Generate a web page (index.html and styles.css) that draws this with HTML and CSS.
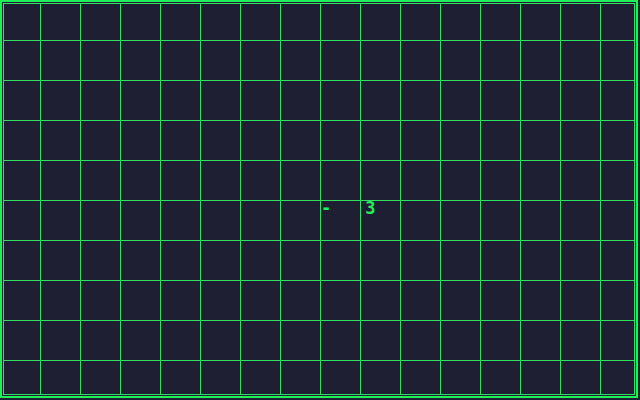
FILE: index.html
```html
<!DOCTYPE html>
<html>
<head>
<meta charset="utf-8">
<link rel="stylesheet" href="styles.css">
</head>
<body>
<div class="board">
  <div class="labels">
    <span class="minus">-</span>
    <span class="num">3</span>
  </div>
</div>
</body>
</html>
```
FILE: styles.css
```css
html, body {
  margin: 0;
  padding: 0;
  background: #1f1f33;
  width: 640px;
  height: 400px;
  overflow: hidden;
}
.board {
  box-sizing: border-box;
  width: 638px;
  height: 398px;
  border: 2px solid #1ff05a;
  box-shadow: inset 0 0 0 1px #1f1f33, inset 0 0 0 2px #30e060;
  background-color: #1f1f33;
  background-image:
    linear-gradient(to right, #30e060 1px, transparent 1px),
    linear-gradient(to bottom, #30e060 1px, transparent 1px);
  background-size: 40px 40px;
  background-origin: border-box;
  background-position: 0 0;
  display: flex;
  flex-direction: column;
}
.labels {
  display: flex;
  align-items: baseline;
  padding: 196px 0 0 319px;
  gap: 34px;
  font-family: "DejaVu Sans Mono", monospace;
  font-weight: bold;
  font-size: 17px;
  color: #1ff05a;
  line-height: 20px;
}
```
